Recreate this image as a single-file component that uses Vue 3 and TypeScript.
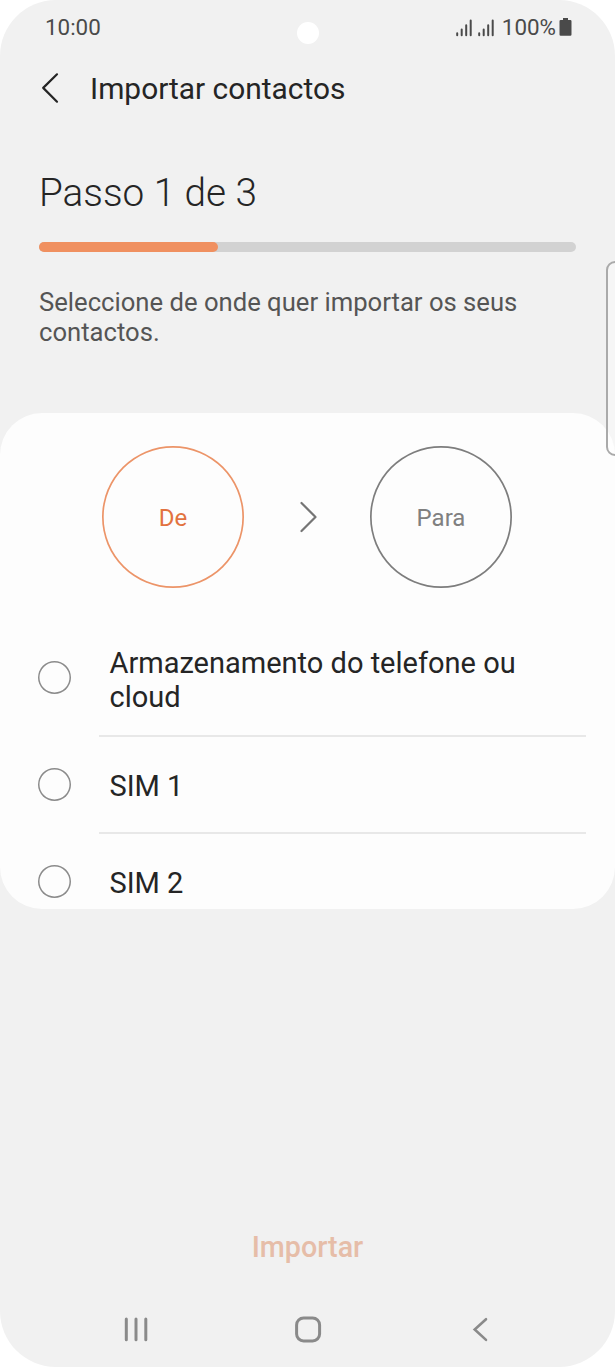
<script setup lang="ts">
import { ref } from 'vue'

interface Source {
  id: string
  label: string
}

const sources: Source[] = [
  { id: 'phone', label: 'Armazenamento do telefone ou cloud' },
  { id: 'sim1', label: 'SIM 1' },
  { id: 'sim2', label: 'SIM 2' },
]

const selected = ref<string | null>(null)
const step = 1
const steps = 3
</script>

<template>
  <div class="phone">
    <header class="status">
      <span class="clock">10:00</span>
      <div class="indicators">
        <svg v-for="n in 2" :key="n" class="signal" width="16" height="18" viewBox="0 0 16 18">
          <path d="M1.2 14.2V16.2M5.7 10.4V16.2M10.2 6.2V16.2M14.7 1.5V16.2" />
        </svg>
        <span class="percent">100%</span>
        <svg class="battery" width="13" height="18" viewBox="0 0 13 18">
          <path d="M4 0h5v2h2.3q1.2 0 1.2 1.2v13.3q0 1.2-1.2 1.2H1.7q-1.2 0-1.2-1.2V3.2q0-1.2 1.2-1.2H4z" />
        </svg>
      </div>
    </header>
    <span class="camera"></span>

    <div class="appbar">
      <svg class="back" width="18" height="32" viewBox="0 0 18 32">
        <path d="M16 2.3L2.2 15.9L16 29.7" />
      </svg>
      <h1 class="title">Importar contactos</h1>
    </div>

    <section class="intro">
      <h2 class="step">Passo {{ step }} de {{ steps }}</h2>
      <div class="track">
        <div class="fill" :style="{ width: (step / steps) * 100 + '%' }"></div>
      </div>
      <p class="hint">Seleccione de onde quer importar os seus contactos.</p>
    </section>

    <main class="card">
      <div class="route">
        <div class="node active">De</div>
        <svg class="arrow" width="18" height="32" viewBox="0 0 18 32">
          <path d="M2.5 2L16.5 16L2.5 30" />
        </svg>
        <div class="node">Para</div>
      </div>
      <ul class="list">
        <li v-for="s in sources" :key="s.id" class="row" @click="selected = s.id">
          <span class="radio" :class="{ checked: selected === s.id }"></span>
          <span class="label">{{ s.label }}</span>
        </li>
      </ul>
    </main>

    <div class="action">
      <button class="import" type="button" :disabled="!selected">Importar</button>
    </div>

    <nav class="nav">
      <svg width="28" height="28" viewBox="0 0 28 28">
        <path d="M4.3 4V24.8M14 4V24.8M23.8 4V24.8" />
      </svg>
      <svg width="28" height="28" viewBox="0 0 28 28">
        <rect x="2.6" y="2.9" width="23" height="23" rx="7" />
      </svg>
      <svg width="28" height="28" viewBox="0 0 28 28">
        <path class="chevron" d="M20 4.2L8.7 14.5L20 24.9" />
      </svg>
    </nav>
    <span class="edge"></span>
  </div>
</template>

<style>
body {
  background: #fff;
}
</style>

<style scoped>
.phone {
  position: relative;
  display: flex;
  flex-direction: column;
  box-sizing: border-box;
  width: 615px;
  height: 1367px;
  overflow: hidden;
  border-radius: 56px;
  background: #f1f1f1;
  color: #252525;
  font-family: Roboto, "Liberation Sans", sans-serif;
}
.status {
  display: flex;
  justify-content: space-between;
  align-items: center;
  box-sizing: border-box;
  height: 54px;
  padding: 0 43px 0 45px;
  color: #4a4a4a;
  font-size: 22.4px;
  line-height: 54px;
}
.indicators {
  display: flex;
  align-items: center;
}
.signal {
  margin: 1px 6px 0 0;
  fill: none;
  stroke: #4a4a4a;
  stroke-width: 2;
  stroke-linecap: round;
}
.percent {
  margin: 0 3px 0 2px;
}
.battery {
  margin-top: -1px;
  fill: #4a4a4a;
}
.camera {
  position: absolute;
  left: 297px;
  top: 22px;
  width: 22px;
  height: 22px;
  border-radius: 50%;
  background: #fff;
}
.appbar {
  display: flex;
  align-items: center;
  height: 70px;
  padding-left: 41px;
}
.back {
  margin-top: -2px;
  fill: none;
  stroke: #252525;
  stroke-width: 2.2;
  stroke-linecap: round;
  stroke-linejoin: round;
}
.title {
  margin: 0 0 0 31px;
  font-size: 29.9px;
  font-weight: 400;
  line-height: 40px;
}
.intro {
  box-sizing: border-box;
  height: 289px;
  padding: 45px 39px 0;
}
.step {
  margin: 0;
  font-size: 38.7px;
  font-weight: 300;
  line-height: 48px;
}
.track {
  height: 10px;
  margin-top: 25px;
  border-radius: 5px;
  background: #d2d2d2;
}
.fill {
  height: 100%;
  border-radius: 5px;
  background: #f09060;
}
.hint {
  margin: 35px 0 0;
  color: #555;
  font-size: 25.65px;
  line-height: 30px;
}
.card {
  box-sizing: border-box;
  height: 496px;
  padding-top: 33px;
  overflow: hidden;
  border-radius: 42px;
  background: #fdfdfd;
}
.route {
  display: flex;
  padding-left: 102px;
  align-items: center;
}
.node {
  width: 142px;
  height: 142px;
  border-radius: 50%;
  box-shadow: inset 0 0 0 1.7px #7d7d7d;
  color: #808080;
  font-size: 24px;
  line-height: 144px;
  text-align: center;
}
.node.active {
  box-shadow: inset 0 0 0 1.7px #ec9468;
  color: #e27240;
}
.arrow {
  margin: 0 53px 0 55px;
  fill: none;
  stroke: #757575;
  stroke-width: 2.2;
  stroke-linecap: round;
  stroke-linejoin: round;
}
.list {
  margin: 32px 0 0;
  padding: 0 29px 0 38px;
  list-style: none;
}
.row {
  display: flex;
  align-items: center;
  height: 97px;
}
.row:first-child {
  height: 117px;
}
.radio {
  flex: none;
  width: 33px;
  height: 33px;
  margin: -2px 28px 0 0;
  border-radius: 50%;
  box-shadow: inset 0 0 0 1.5px #8b8b8b;
}
.radio.checked {
  box-shadow: inset 0 0 0 9px #f09060;
}
.label {
  display: flex;
  flex: 1;
  align-items: center;
  box-sizing: border-box;
  height: 100%;
  padding: 2px 50px 0 10.5px;
  border-bottom: 2px solid #e8e8e8;
  font-size: 29px;
  line-height: 34px;
}
.row:first-child .label {
  padding-top: 4px;
}
.row:last-child .label {
  border-bottom-color: transparent;
}
.action {
  display: flex;
  flex: 1;
  justify-content: center;
  align-items: flex-end;
}
.import {
  margin-bottom: 48px;
  padding: 0;
  border: 0;
  background: none;
  color: #e27240;
  font: 500 28.7px/40px Roboto, "Liberation Sans", sans-serif;
}
.import:disabled {
  color: #e6bda8;
}
.nav {
  display: flex;
  justify-content: space-between;
  align-items: center;
  height: 28px;
  margin-bottom: 24px;
  padding: 0 121px 0 122px;
}
.nav svg {
  fill: none;
  stroke: #8a8a8a;
  stroke-width: 3;
  stroke-linecap: round;
}
.nav .chevron {
  stroke-width: 2.6;
}
.edge {
  position: absolute;
  left: 606px;
  top: 261px;
  box-sizing: border-box;
  width: 20px;
  height: 195px;
  border: 2px solid #aaa;
  border-radius: 9px;
  background: rgba(255, 255, 255, 0.4);
}
</style>
